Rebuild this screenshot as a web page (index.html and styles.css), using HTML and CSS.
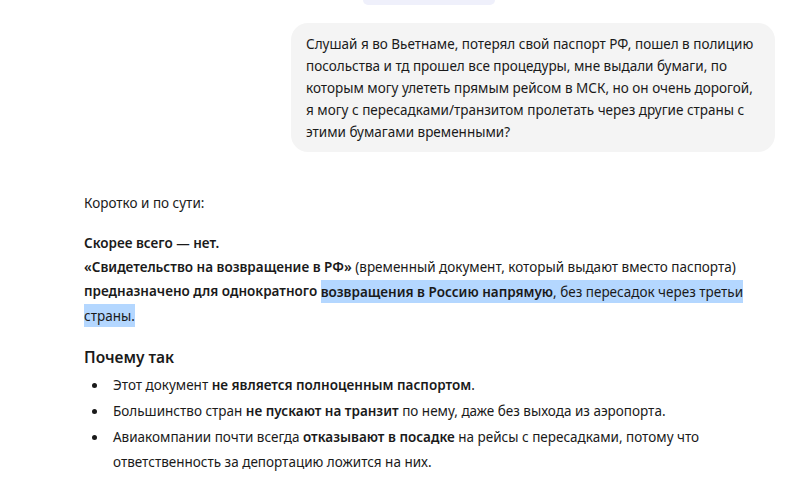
FILE: index.html
```html
<!DOCTYPE html>
<html lang="ru">
<head>
<meta charset="utf-8">
<title>Чат</title>
<link rel="stylesheet" href="styles.css">
</head>
<body>
<div class="chat">
  <div class="prev-bubble"></div>
  <div class="user-row">
    <div class="user-bubble">Слушай я во Вьетнаме, потерял свой паспорт РФ, пошел в полицию посольства и тд прошел все процедуры, мне выдали бумаги, по которым могу улететь прямым рейсом в МСК, но он очень дорогой, я могу с пересадками/транзитом пролетать через другие страны с этими бумагами временными?</div>
  </div>
  <div class="answer">
    <p>Коротко и по сути:</p>
    <p><b>Скорее всего — нет.</b><br>
    <b>«Свидетельство на возвращение в РФ»</b> (временный документ, который выдают вместо паспорта) <b>предназначено для однократного </b><span class="sel"><b>возвращения в Россию напрямую</b>, без пересадок через третьи страны.</span></p>
    <h3>Почему так</h3>
    <ul>
      <li>Этот документ <b>не является полноценным паспортом</b>.</li>
      <li>Большинство стран <b>не пускают на транзит</b> по нему, даже без выхода из аэропорта.</li>
      <li>Авиакомпании почти всегда <b>отказывают в посадке</b> на рейсы с пересадками, потому что ответственность за депортацию ложится на них.</li>
    </ul>
  </div>
</div>
</body>
</html>
```
FILE: styles.css
```css
* { box-sizing: border-box; }
html, body { margin: 0; padding: 0; background: #ffffff; }
body {
  font-family: "Noto Sans", "Open Sans", sans-serif;
  font-size: 13.5px;
  color: #1a1a1a;
}
.chat {
  width: 795px;
  height: 486px;
  overflow: hidden;
}
.prev-bubble {
  margin-left: 363px;
  width: 132px;
  height: 5px;
  background: #eff0fb;
  border-radius: 0 0 16px 16px;
}
.user-row {
  display: flex;
  justify-content: flex-end;
  padding: 18px 20px 0 0;
}
.user-bubble {
  width: 484px;
  background: #f4f4f4;
  border-radius: 17px;
  padding: 10px 14px 9px 15px;
  line-height: 22px;
}
.answer {
  padding: 39px 0 0 84px;
  width: 764px;
  line-height: 24px;
}
.answer p { margin: 0 0 16px; }
.answer b { font-weight: 600; }
.sel {
  background: #b4d7ff;
  padding: 2.5px 0;
  -webkit-box-decoration-break: clone;
  box-decoration-break: clone;
}
.answer h3 {
  margin: 18px 0 4px;
  font-size: 15.5px;
  font-weight: 600;
  line-height: 24px;
}
.answer ul {
  margin: 0;
  padding-left: 29px;
  line-height: 25px;
  list-style: none;
}
.answer li { margin: 0 0 1px; }
.answer li::before {
  content: "";
  display: inline-block;
  width: 5px;
  height: 5px;
  border-radius: 50%;
  background: #1a1a1a;
  margin-left: -21px;
  margin-right: 16px;
  vertical-align: 2px;
}
```
